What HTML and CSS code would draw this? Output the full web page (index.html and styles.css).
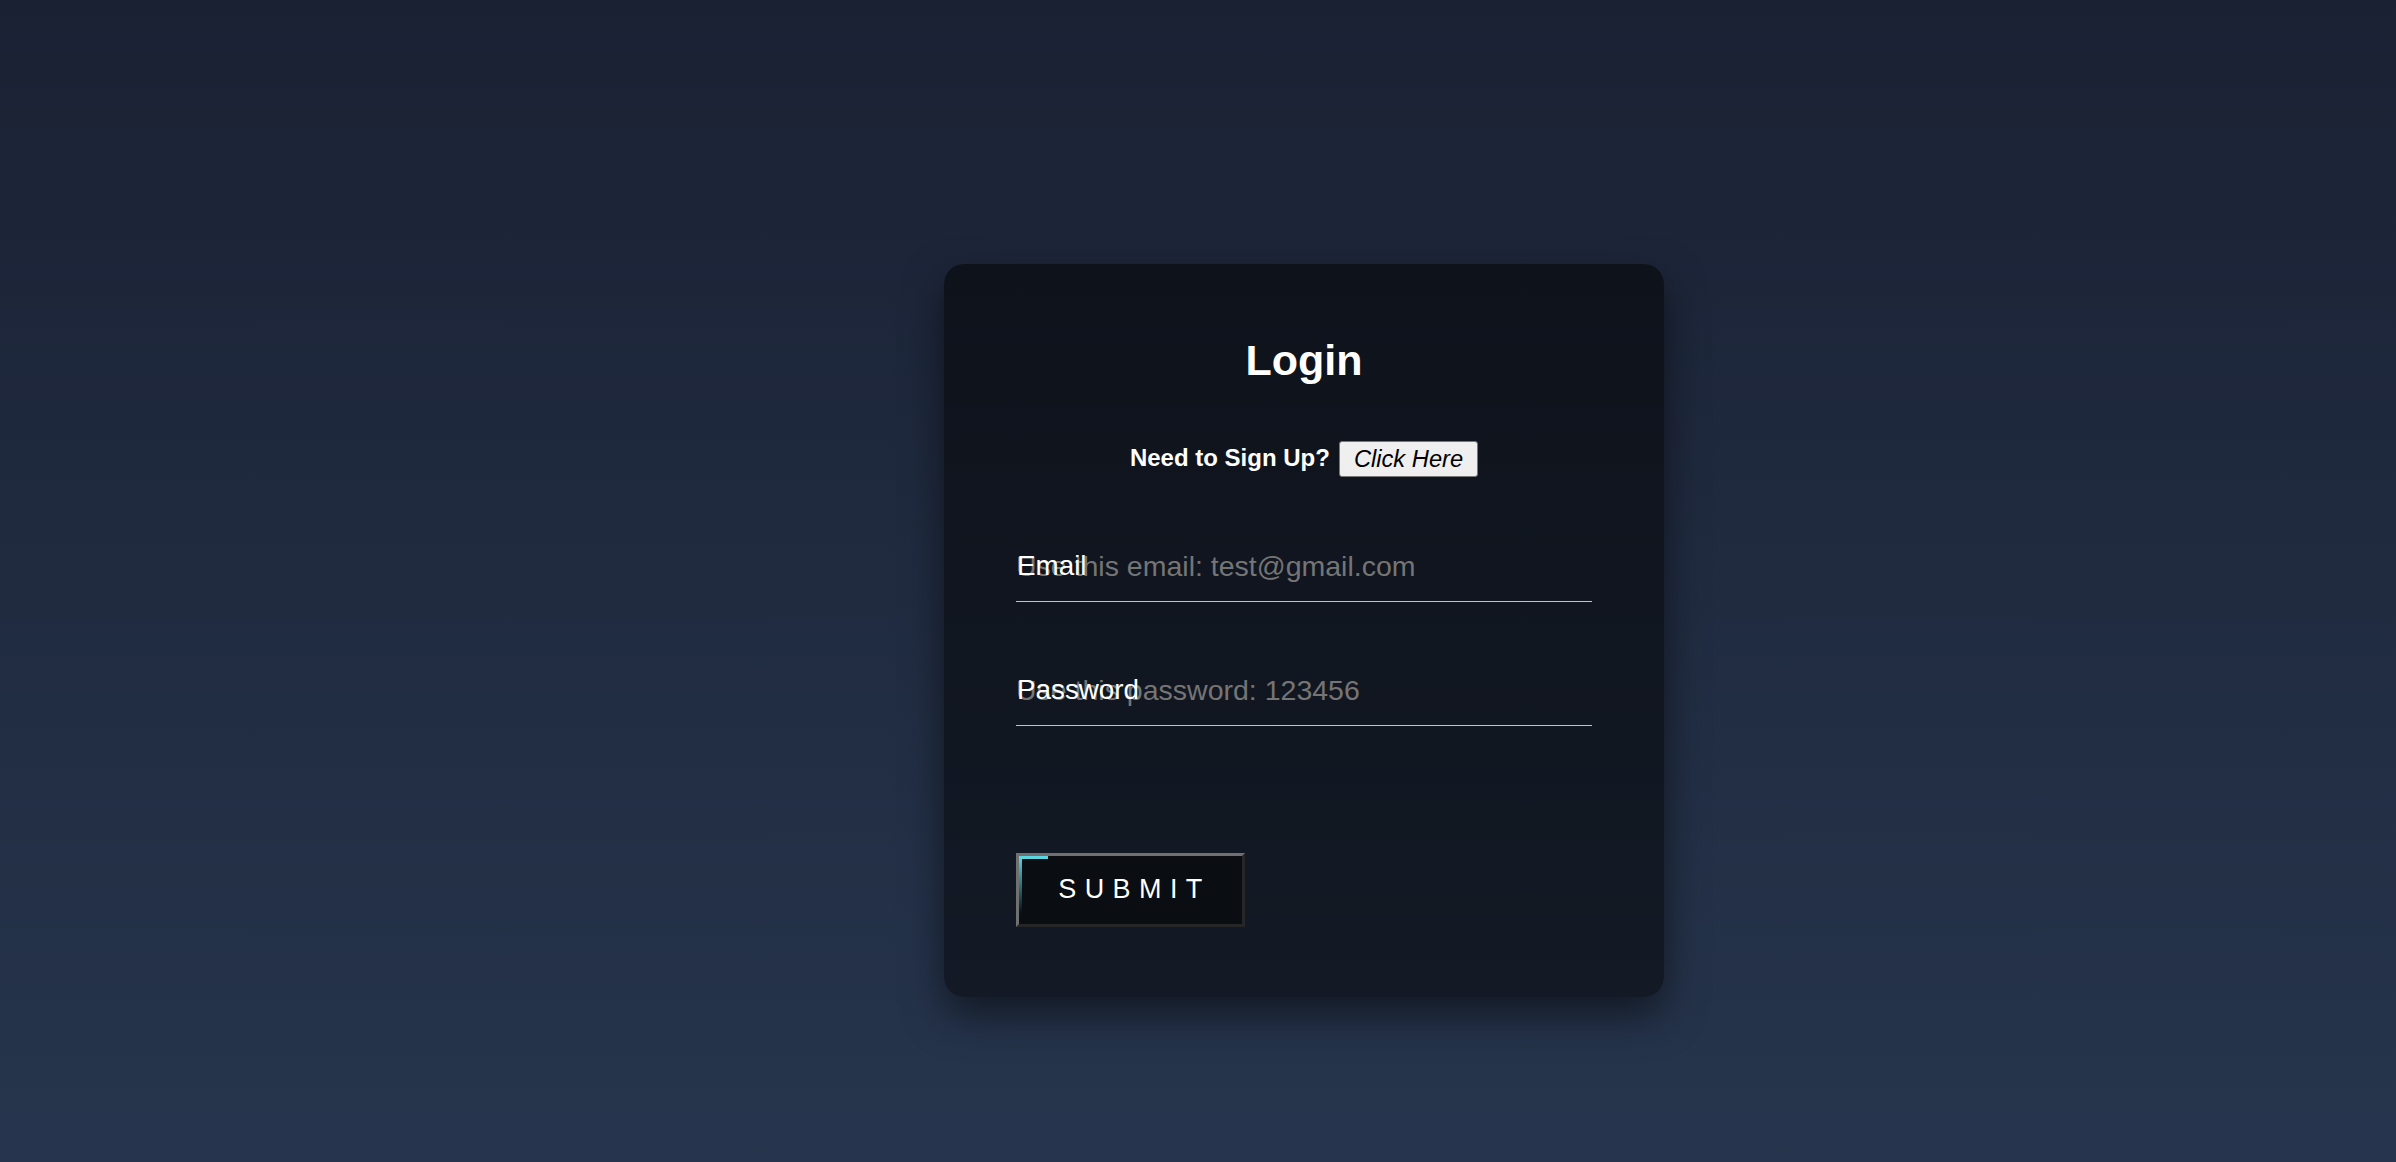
FILE: index.html
```html
<!DOCTYPE html>
<html lang="en">
<head>
<meta charset="utf-8">
<title>Login</title>
<link rel="stylesheet" href="styles.css">
</head>
<body>
<main class="page">
  <form class="card">
    <h1 class="title">Login</h1>
    <div class="signup">
      <span class="signup-text">Need to Sign Up?</span>
      <button type="button" class="signup-btn">Click Here</button>
    </div>
    <div class="field field-email">
      <input class="input" type="email" placeholder="Use this email: test@gmail.com">
      <label class="label">Email</label>
    </div>
    <div class="field field-password">
      <input class="input" type="password" placeholder="Use this password: 123456">
      <label class="label">Password</label>
    </div>
    <button type="button" class="submit">SUBMIT</button>
  </form>
</main>
</body>
</html>
```
FILE: styles.css
```css
html, body {
  margin: 0;
  padding: 0;
}
body {
  min-height: 100vh;
  background: linear-gradient(180deg, #1a2133 0%, #26354d 100%);
  font-family: "Liberation Sans", Arial, Helvetica, sans-serif;
  color: #fff;
  overflow: hidden;
}
.page {
  display: flex;
  justify-content: flex-start;
  padding-top: 264px;
  padding-left: 944px;
}
.card {
  width: 720px;
  box-sizing: border-box;
  padding: 72px 72px 70px;
  border-radius: 20px;
  background: linear-gradient(180deg, #0e121b 0%, #131a25 100%);
  box-shadow: 0 18px 40px rgba(0, 0, 0, 0.5);
  display: flex;
  flex-direction: column;
}
.title {
  margin: 0;
  font-size: 43px;
  line-height: 48px;
  font-weight: 700;
  text-align: center;
}
.signup {
  margin-top: 57px;
  height: 36px;
  display: flex;
  justify-content: center;
  align-items: center;
  gap: 9px;
}
.signup-text {
  font-size: 24px;
  font-weight: 700;
  position: relative;
  top: -1px;
}
.signup-btn {
  height: 36px;
  box-sizing: border-box;
  padding: 0 14px;
  font-family: "Liberation Sans", Arial, sans-serif;
  font-size: 23.7px;
  font-style: italic;
  color: #000;
  background: #efefef;
  border: 1px solid #767676;
  border-radius: 3px;
}
.field {
  position: relative;
}
.field-email {
  margin-top: 74px;
}
.field-password {
  margin-top: 73px;
}
.input {
  display: block;
  width: 100%;
  box-sizing: border-box;
  margin: 0;
  padding: 0 0 20px;
  border: none;
  border-bottom: 1px solid #c4c4c4;
  background: transparent;
  outline: none;
  font-family: "Liberation Sans", Arial, sans-serif;
  font-size: 28.5px;
  line-height: 30px;
  height: 51px;
  color: #fff;
}
.input::placeholder {
  color: #757575;
}
.label {
  position: absolute;
  left: 1px;
  top: -1px;
  font-size: 27.8px;
  line-height: 32px;
  color: #fff;
  pointer-events: none;
}
.submit {
  position: relative;
  align-self: flex-start;
  margin-top: 127px;
  width: 229px;
  height: 74px;
  box-sizing: border-box;
  padding: 0 0 2px 8px;
  background: #0a0d12;
  border-style: solid;
  border-width: 3px;
  border-color: #707070 #262626 #262626 #707070;
  font-family: "Liberation Sans", Arial, sans-serif;
  font-size: 27px;
  letter-spacing: 8.4px;
  color: #fff;
}
.submit::before {
  content: "";
  position: absolute;
  left: 0;
  top: 0;
  width: 29px;
  height: 3px;
  background: #5ad6e0;
}
.submit::after {
  content: "";
  position: absolute;
  left: 0;
  top: 0;
  width: 3px;
  height: 58px;
  background: linear-gradient(180deg, #5ad6e0 0%, rgba(90, 214, 224, 0) 100%);
}
```
